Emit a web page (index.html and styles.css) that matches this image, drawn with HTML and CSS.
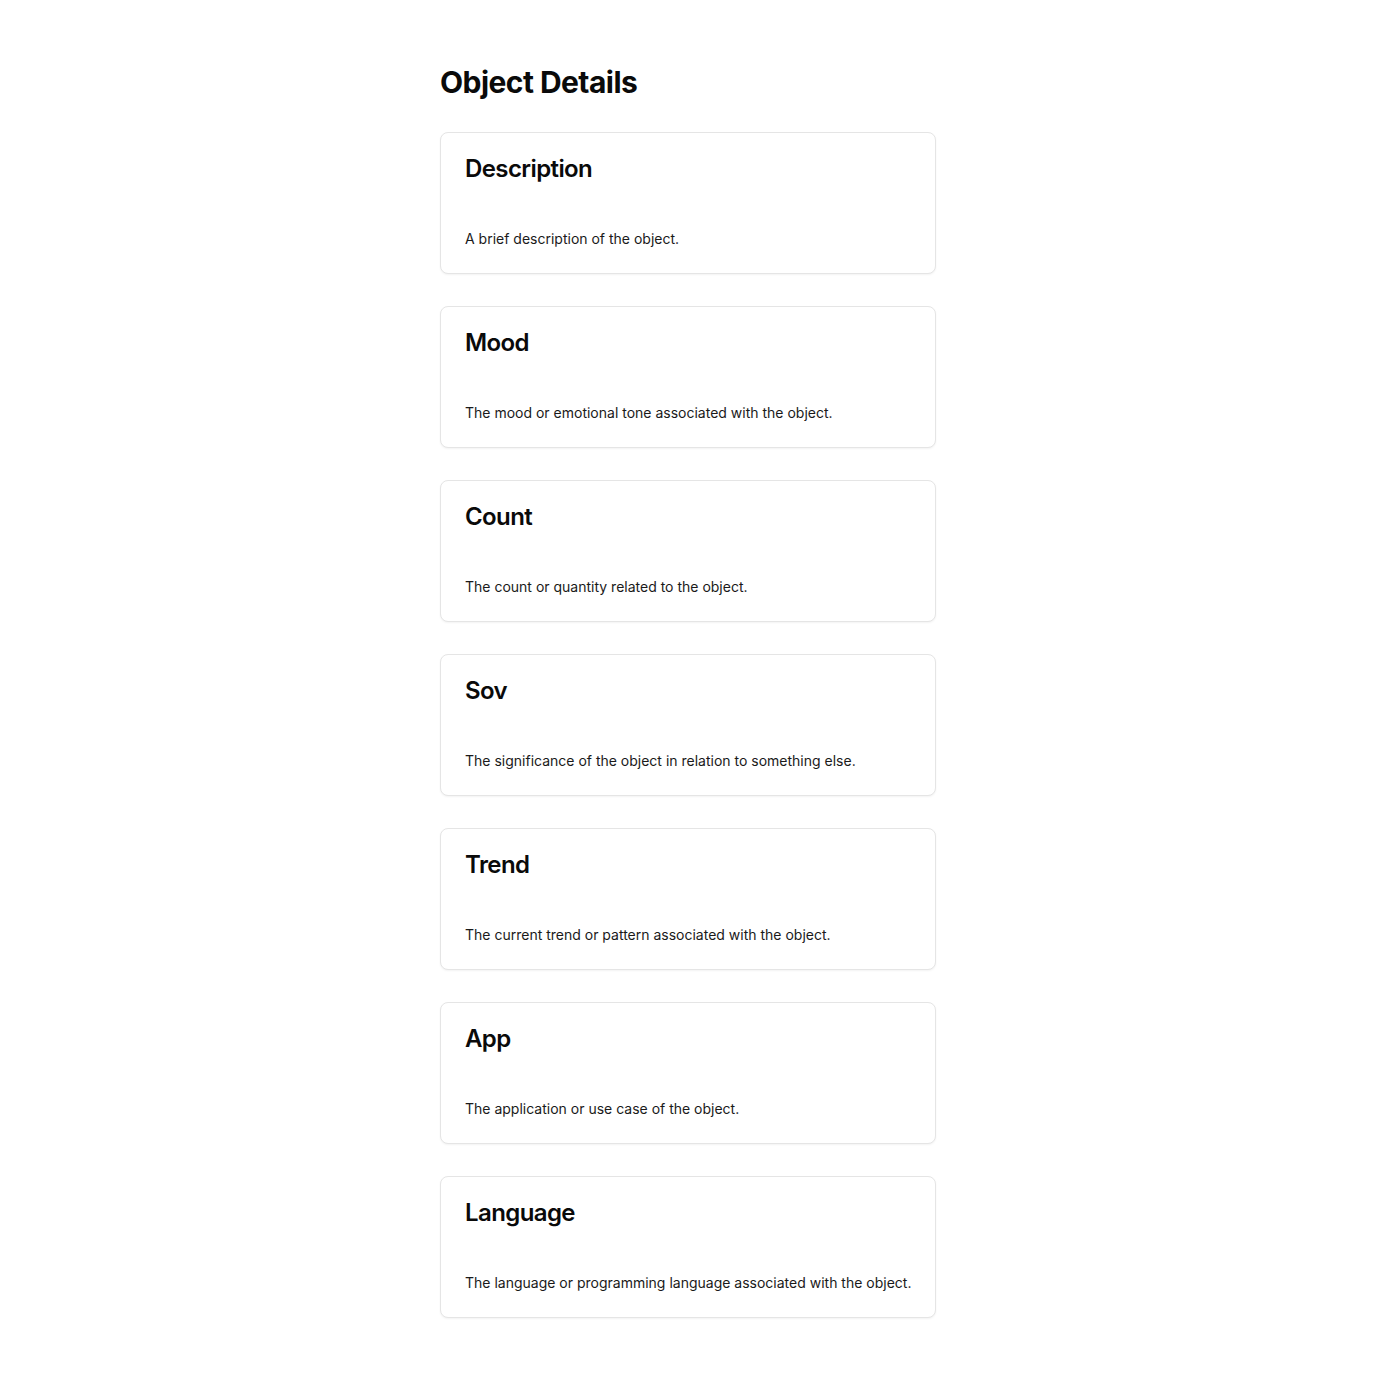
FILE: index.html
```html
<!DOCTYPE html>
<html lang="en">
<head>
<meta charset="utf-8">
<title>Object Details</title>
<link rel="stylesheet" href="styles.css">
</head>
<body>
<main class="page">
  <h1 class="page-title">Object Details</h1>
  <div class="card-list">
    <section class="card">
      <h2 class="card-title">Description</h2>
      <p class="card-text">A brief description of the object.</p>
    </section>
    <section class="card">
      <h2 class="card-title">Mood</h2>
      <p class="card-text">The mood or emotional tone associated with the object.</p>
    </section>
    <section class="card">
      <h2 class="card-title">Count</h2>
      <p class="card-text">The count or quantity related to the object.</p>
    </section>
    <section class="card">
      <h2 class="card-title">Sov</h2>
      <p class="card-text">The significance of the object in relation to something else.</p>
    </section>
    <section class="card">
      <h2 class="card-title">Trend</h2>
      <p class="card-text">The current trend or pattern associated with the object.</p>
    </section>
    <section class="card">
      <h2 class="card-title">App</h2>
      <p class="card-text">The application or use case of the object.</p>
    </section>
    <section class="card">
      <h2 class="card-title">Language</h2>
      <p class="card-text">The language or programming language associated with the object.</p>
    </section>
  </div>
</main>
</body>
</html>
```

FILE: styles.css
```css
* { box-sizing: border-box; }
html, body { margin: 0; padding: 0; background: #ffffff; }
body {
  font-family: Inter, "Noto Sans", "Liberation Sans", sans-serif;
  color: #0a0a0a;
}
.page {
  width: 496px;
  margin: 0 auto;
  padding: 64px 0 64px;
}
.page-title {
  margin: 0 0 32px;
  font-size: 30px;
  line-height: 36px;
  font-weight: 700;
  letter-spacing: -0.55px;
  color: #0a0a0a;
}
.card-list {
  display: flex;
  flex-direction: column;
  gap: 32px;
}
.card {
  border: 1px solid #e5e5e5;
  border-radius: 8px;
  background: #fff;
  box-shadow: 0 1px 2px rgba(0, 0, 0, 0.05);
  padding: 24px 20px 24px 24px;
  height: 142px;
}
.card-title {
  margin: 0;
  font-size: 24px;
  line-height: 24px;
  font-weight: 600;
  letter-spacing: -0.6px;
  color: #0a0a0a;
}
.card-text {
  margin: 48px 0 0;
  font-size: 14px;
  line-height: 20px;
  color: #1a1a1a;
  white-space: nowrap;
}
```
